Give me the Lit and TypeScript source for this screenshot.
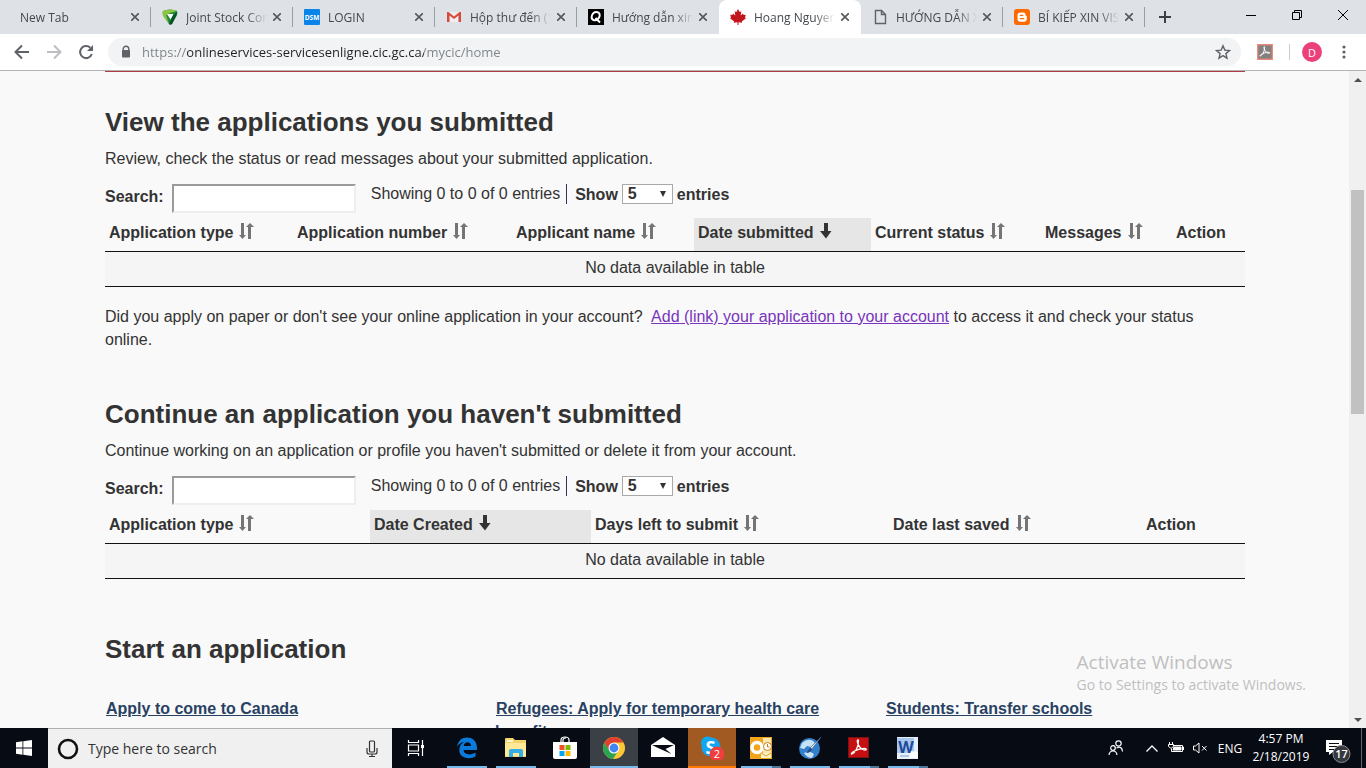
import { LitElement, html, svg, css, nothing } from "lit";
import { customElement, property } from "lit/decorators.js";
import { classMap } from "lit/directives/class-map.js";

interface Column {
  label: string;
  share: number;
  sort: "both" | "down" | "none";
}

@customElement("entries-table")
class EntriesTable extends LitElement {
  @property({ attribute: false }) columns: Column[] = [];
  @property() name = "";

  static styles = css`
    :host {
      display: block;
      margin-top: 14px;
    }
    .controls {
      display: flex;
      align-items: flex-start;
      height: 34px;
    }
    .search {
      display: flex;
      align-items: flex-start;
      gap: 8px;
      font-weight: bold;
      line-height: 25px;
      margin-right: 15px;
    }
    .search-box {
      box-sizing: border-box;
      width: 184px;
      height: 29px;
      padding: 0 4px;
      border: 2px solid;
      border-color: #9a9a9a #eeeeee #eeeeee #9a9a9a;
      background: #fff;
      font: inherit;
      font-weight: normal;
      color: #333;
    }
    .info {
      line-height: 20px;
      padding-right: 6px;
      border-right: 1px solid #335;
    }
    .show {
      display: flex;
      align-items: flex-start;
      gap: 4px;
      margin-left: 8px;
      line-height: 22px;
      font-weight: bold;
    }
    .picker {
      display: grid;
      width: 51px;
      height: 20px;
    }
    .picker > * {
      grid-area: 1 / 1;
    }
    .select {
      appearance: none;
      box-sizing: border-box;
      width: 100%;
      height: 20px;
      padding: 0 5px;
      border: 1px solid #a9a9a9;
      border-radius: 0;
      background: #fff;
      color: #333;
      font: inherit;
      line-height: 18px;
    }
    .caret {
      width: 6px;
      height: 6px;
      align-self: center;
      justify-self: end;
      margin-right: 7px;
      pointer-events: none;
    }
    .table {
      width: 100%;
      table-layout: fixed;
      border-collapse: separate;
      border-spacing: 0;
    }
    .head {
      padding: 3px 4px 7px;
      border-bottom: 1px solid #111;
      text-align: left;
      white-space: nowrap;
      line-height: 23px;
    }
    .sorted {
      background: #e6e6e6;
    }
    .sorter {
      display: flex;
      align-items: center;
      gap: 5px;
      padding: 0;
      border: 0;
      background: none;
      font: inherit;
      color: inherit;
    }
    .arrow {
      width: 16px;
      height: 16px;
      margin-bottom: 3px;
    }
    .empty {
      padding: 4px 4px 7px;
      border-bottom: 1px solid #111;
      background: #f5f5f5;
      text-align: center;
      line-height: 23px;
    }
  `;

  private arrow(kind: Column["sort"]) {
    return kind === "both"
      ? html`<svg class="arrow" viewBox="0 0 16 16" fill="#757575">
          <path d="M3 0h3v12h2l-3.500 4L1 12h2zM10 16h3V4h3l-4-4-4 4h2z" />
        </svg>`
      : html`<svg class="arrow" viewBox="0 0 16 16" fill="#333">
          <path d="M5 0h4v8h3.500L7 15.500 1 8h4z" />
        </svg>`;
  }

  render() {
    const total = this.columns.reduce((sum, c) => sum + c.share, 0);
    return html`
      <div class="controls">
        <label class="search" for="search">Search:
          <input class="search-box" id="search" type="text" />
        </label>
        <span class="info">Showing 0 to 0 of 0 entries</span>
        <label class="show">Show
          <span class="picker">
            <select class="select">
              <option>5</option>
              <option>10</option>
              <option>25</option>
            </select>
            <svg class="caret" viewBox="0 0 6 6"><path d="M0 0h6L3 6z" fill="#333" /></svg>
          </span>
          entries
        </label>
      </div>
      <table class="table" aria-label=${this.name}>
        <colgroup>
          ${this.columns.map((c) => html`<col style="width:${(c.share / total) * 100}%" />`)}
        </colgroup>
        <thead>
          <tr>
            ${this.columns.map(
              (c) => html`<th class=${classMap({ head: true, sorted: c.sort === "down" })} scope="col">
                ${c.sort === "none"
                  ? c.label
                  : html`<button class="sorter">${c.label}${this.arrow(c.sort)}</button>`}
              </th>`
            )}
          </tr>
        </thead>
        <tbody>
          <tr>
            <td class="empty" colspan=${this.columns.length}>No data available in table</td>
          </tr>
        </tbody>
      </table>
    `;
  }
}

const MAPLE =
  "M8 0l1.6 3 1.7-.8-.6 4.2L13 4.600l.6 1.400 2.200-.2-.8 2.700 1 .8-4.200 3.200.4 1.300-3.700-.5V16H7.500v-2.700l-3.700.5.4-1.300L0 9.300l1-.8L.2 5.800 2.400 6 3 4.600l2.300 1.800-.6-4.200 1.700.8z";

const favicons = {
  none: nothing,
  shield: svg`<path d="M1 2q7-3 14 0 1 3-1 6l-4 7q-2 1-3 0L2 8Q0 5 1 2z" fill="#1f8a3b"/><path d="M1 2q7-3 14 0L8 4 4 6l3 9L2 8Q0 5 1 2z" fill="#8cc63f"/><path d="M15 3q0 3-2 6l-3 6q-2 1-3 0l4-9z" fill="#07502a"/><path d="M5 5h6.500L8.500 10.500z" fill="#fff"/>`,
  dsm: svg`<rect width="16" height="16" rx="1" fill="#0a84e8"/><text x="8" y="10.500" text-anchor="middle" font-family="Open Sans" font-size="6.500" font-weight="bold" fill="#fff">DSM</text>`,
  gmail: svg`<path d="M1 3h14v10H1z" fill="#eee"/><path d="M1 13V3h1.500L8 7.500 13.500 3H15v10h-2.500V6.500L8 10 3.500 6.500V13z" fill="#d54b3d"/>`,
  q: svg`<rect width="16" height="16" fill="#000"/><path d="M10.500 3.500C6.500 1.800 3.500 5 3.600 8.300c.1 3.200 3.900 4 6.300 1.800 2-1.900 2.600-5 .6-6.600M7.500 9l4.500 4.500" fill="none" stroke="#fff" stroke-width="2"/>`,
  maple: svg`<path d=${MAPLE} fill="#c3161c"/>`,
  page: svg`<path d="M3.500 1.500h6l4 4v9h-10zM9.500 1.500v4h4" fill="none" stroke="#5f6368" stroke-width="1.400"/>`,
  blogger: svg`<rect width="16" height="16" rx="3" fill="#ff6a00"/><path d="M6.500 3.500h2.700a2.300 2.300 0 0 1 2.300 2.500q0 1 1.300 1v2.700a3 3 0 0 1-3 3H6.500a3 3 0 0 1-3-3V6.500a3 3 0 0 1 3-3z" fill="#fff"/><path d="M6.300 6.300h2.500M6.300 9.700h3.500" stroke="#ff6a00" stroke-width="1.300" stroke-linecap="round"/>`,
};

const acrobatLine =
  "M5 18c3-1 6-6 6.500-13 0-2-2-1-1 1.500 1 4 4 7.500 7.500 7.500 2 0 1.500-1.800-1-1.700C13 12.500 9 14 6.500 15.500 4 17 4 18.500 5 18z";

const apps = [
  {
    name: "Microsoft Edge",
    state: "running",
    icon: svg`<path d="M2 11C3 4.500 7 1.500 12 1.500c6.500 0 10 4.500 10 10.500v2H8.500c.3 5 7.500 5.500 12 2.600v4C14 24 4.500 22 4.300 14.500 4.200 10.500 6 7.500 9 6 5.500 6.500 3.500 8.200 2 11zm6.700-1H16c0-5-6.800-5-7.300 0z" fill="#0a7bdc"/>`,
  },
  {
    name: "File Explorer",
    state: "running",
    icon: svg`<path d="M1 3q0-1 1-1h7l2 2h11v17H1z" fill="#f3d36b"/><path d="M3 4h6v2H3z" fill="#fff6cf"/><path d="M1 7h21v13H1z" fill="#ffe896"/><path d="M5 21v-6q0-2 2-2h10q2 0 2 2v6h-4v-4H9v4z" fill="#35ade5"/>`,
  },
  {
    name: "Microsoft Store",
    state: "idle",
    icon: svg`<path d="M8 6V4q0-3 4-3t4 3v2M10 6V3.500Q10.500 2 13 2" fill="none" stroke="#fff" stroke-width="1.200"/><path d="M0 6h24v15q0 2-2 2H2q-2 0-2-2z" fill="#fff"/><path d="M6.500 9h5v5h-5z" fill="#f25022"/><path d="M12.500 9h5v5h-5z" fill="#7fba00"/><path d="M6.500 15h5v5h-5z" fill="#00a4ef"/><path d="M12.500 15h5v5h-5z" fill="#ffb900"/>`,
  },
  {
    name: "Google Chrome",
    state: "active",
    icon: svg`<circle cx="12" cy="12" r="11" fill="#fcc934"/><path d="M12 12L2.500 6.500A11 11 0 0 1 21.500 6.500H12z" fill="#e2402e"/><path d="M2.500 6.500A11 11 0 0 0 11 23l5.500-8.500L12 12 6 12z" fill="#2da44f"/><path d="M2.500 6.500L7 14l5-7.500z" fill="#e2402e"/><circle cx="12" cy="12" r="5.500" fill="#fff"/><circle cx="12" cy="12" r="4.400" fill="#4285f4"/>`,
  },
  {
    name: "Mail",
    state: "idle",
    icon: svg`<path d="M0 9l12-8 12 8v12H0z" fill="#fff"/><path d="M1 9h22l-8.500 4 6 5L6 11.500z" fill="#070b14"/>`,
  },
  {
    name: "Skype",
    state: "alert",
    icon: svg`<circle cx="7.500" cy="7" r="6.500" fill="#00aff0"/><circle cx="15" cy="15.500" r="6.500" fill="#0092e0"/><circle cx="11" cy="11" r="9.500" fill="#12a5f4"/><text x="10.500" y="17.500" text-anchor="middle" font-family="Open Sans" font-size="18" font-weight="bold" fill="#fff">S</text><circle cx="17" cy="18" r="7.500" fill="#ee3e3e"/><text x="17" y="22" text-anchor="middle" font-family="Open Sans" font-size="11" fill="#fff">2</text>`,
  },
  {
    name: "Outlook",
    state: "stacked",
    icon: svg`<path d="M1 1h22v22H1z" fill="#f2a51b"/><path d="M14 2h8v20h-8z" fill="#fbe7b3"/><circle cx="8" cy="11.500" r="5" fill="none" stroke="#fff" stroke-width="3.500"/><circle cx="18.500" cy="10.500" r="4" fill="#fff" stroke="#c58219"/><path d="M18.500 8v3h2" fill="none" stroke="#c58219"/><path d="M12 17h10v5H12z" fill="#fff3ca"/><path d="M12 17l5 3 5-3" fill="none" stroke="#e0a030"/>`,
  },
  {
    name: "UniKey",
    state: "running",
    icon: svg`<circle cx="11.500" cy="12.500" r="10.500" fill="#327fcb"/><path d="M4 7q8-7 14 1l-5 3-4-1-3 3-4-1zM6 17l5-2 5 3-2 4q-5 0-8-5z" fill="#c6e2f5"/><path d="M23 1L14 13l-2-1z" fill="#edf2f7" stroke="#315e98" stroke-width=".7"/><path d="M14 13q-1 4-6 4l4-5z" fill="#254c86"/>`,
  },
  {
    name: "Adobe Reader",
    state: "stacked",
    icon: svg`<rect x="1.500" y="1.500" width="20" height="20" fill="#c60f12" stroke="#7c1113"/><path d=${acrobatLine} fill="none" stroke="#fff" stroke-width="1.300"/>`,
  },
  {
    name: "Word",
    state: "stacked",
    icon: svg`<path d="M1 1h21v22H1z" fill="#e6effa"/><path d="M1 2h17v15H1z" fill="#a9c7ec"/><text x="10" y="17" text-anchor="middle" font-family="Open Sans" font-size="16" font-weight="bold" fill="#1d4a9c">W</text><path d="M15 15l7 1v6h-9z" fill="#fff"/><path d="M4 20h9" stroke="#7da0cf"/>`,
  },
];

const tabs: { title: string; icon: keyof typeof favicons; active?: boolean; rule?: boolean }[] = [
  { title: "New Tab", icon: "none", rule: true },
  { title: "Joint Stock Company", icon: "shield", rule: true },
  { title: "LOGIN", icon: "dsm", rule: true },
  { title: "Hộp thư đến (1) - Gmail", icon: "gmail", rule: true },
  { title: "Hướng dẫn xin visa", icon: "q" },
  { title: "Hoang Nguyen", icon: "maple", active: true },
  { title: "HƯỚNG DẪN XIN VISA", icon: "page", rule: true },
  { title: "BÍ KIẾP XIN VISA", icon: "blogger", rule: true },
];

const submitted: Column[] = [
  { label: "Application type", share: 188, sort: "both" },
  { label: "Application number", share: 219, sort: "both" },
  { label: "Applicant name", share: 182, sort: "both" },
  { label: "Date submitted", share: 177, sort: "down" },
  { label: "Current status", share: 170, sort: "both" },
  { label: "Messages", share: 131, sort: "both" },
  { label: "Action", share: 73, sort: "none" },
];

const drafts: Column[] = [
  { label: "Application type", share: 265, sort: "both" },
  { label: "Date Created", share: 221, sort: "down" },
  { label: "Days left to submit", share: 298, sort: "both" },
  { label: "Date last saved", share: 253, sort: "both" },
  { label: "Action", share: 103, sort: "none" },
];

@customElement("app-root")
class AppRoot extends LitElement {
  static styles = css`
    :host {
      display: flex;
      flex-direction: column;
      height: 100vh;
      overflow: hidden;
      font-family: "Open Sans", "Noto Sans", sans-serif;
      font-size: 12px;
      color: #333;
    }
    button {
      display: flex;
      align-items: center;
      justify-content: center;
      padding: 0;
      border: 0;
      background: none;
      color: inherit;
      font: inherit;
    }
    svg {
      display: block;
      flex: none;
    }

    .tabs {
      display: flex;
      flex: none;
      height: 34px;
      padding-left: 9px;
      background: #dee1e6;
    }
    .tab {
      display: flex;
      align-items: center;
      flex: 0 1 142px;
      min-width: 0;
      color: #45494d;
    }
    .tab-active {
      background: #fff;
      border-radius: 8px 8px 0 0;
    }
    .tab-button {
      flex: 1;
      min-width: 0;
      height: 100%;
      gap: 8px;
      padding-left: 11px;
      justify-content: flex-start;
    }
    .tab-title {
      flex: 1;
      overflow: hidden;
      white-space: nowrap;
      text-align: left;
      mask-image: linear-gradient(to right, #000 75%, transparent);
    }
    .tab-close {
      width: 16px;
      height: 16px;
      margin: 0 7px 0 2px;
    }
    .tab-rule {
      width: 1px;
      height: 20px;
      background: transparent;
    }
    .tab-rule-on {
      background: #9a9da2;
    }
    .new-tab {
      width: 40px;
    }
    .window {
      display: flex;
      margin-left: auto;
      height: 29px;
    }
    .window-button {
      width: 46px;
    }

    .toolbar {
      display: flex;
      align-items: center;
      flex: none;
      height: 36px;
      padding: 0 6px;
      border-bottom: 1px solid #b3b3b5;
      background: #fff;
    }
    .nav-button {
      width: 32px;
      height: 28px;
    }
    .omnibox {
      display: flex;
      align-items: center;
      flex: 1;
      height: 28px;
      margin: 0 8px 0 6px;
      padding: 0 10px 0 12px;
      gap: 10px;
      border-radius: 14px;
      background: #f1f3f4;
    }
    .url {
      flex: 1;
      min-width: 0;
      height: 24px;
      padding: 0;
      border: 0;
      outline: 0;
      font: inherit;
      font-size: 13px;
      color: transparent;
      background: linear-gradient(to right, #7d8287 44px, #202124 44px, #202124 282px, #7d8287 282px);
      background-clip: text;
    }
    .extension {
      width: 32px;
    }
    .bar-rule {
      width: 1px;
      height: 16px;
      margin: 0 12px 0 8px;
      background: #c9cbce;
    }
    .avatar {
      width: 20px;
      height: 20px;
      border-radius: 50%;
      background: #ec407a;
      color: #fff;
      font-size: 11px;
    }
    .more {
      width: 32px;
      margin-left: 6px;
    }

    .view {
      display: flex;
      flex: 1;
      min-height: 0;
      background: #f9f9f9;
    }
    .page {
      flex: 1;
      overflow: hidden;
      padding-left: 1px;
      font: 16px/23px "Liberation Sans", Arial, sans-serif;
    }
    .container {
      max-width: 1140px;
      margin: 0 auto;
      border-top: 1px solid #af3c43;
    }
    .section {
      margin-bottom: 49px;
    }
    .heading {
      margin: 0;
      font-size: 26px;
      line-height: 28px;
    }
    .first {
      margin-top: 36px;
    }
    .intro {
      margin: 11px 0 0;
    }
    .note {
      margin: 18px 0 0;
    }
    .note-link {
      margin-left: 4px;
      color: #7834bc;
    }
    .drafts {
      margin-bottom: 56px;
    }
    .starts {
      display: grid;
      grid-template-columns: repeat(3, 1fr);
      gap: 30px;
      margin-top: 34px;
    }
    .start-link {
      padding-left: 1px;
      font-weight: bold;
      color: #284162;
    }

    .scrollbar {
      display: flex;
      flex-direction: column;
      align-items: center;
      width: 17px;
      background: #f0f0f0;
    }
    .scroll-button {
      width: 17px;
      height: 17px;
    }
    .track-before {
      flex: 102;
    }
    .thumb {
      flex: 224;
      width: 13px;
      background: #c1c1c1;
    }
    .track-after {
      flex: 297;
    }

    .watermark {
      position: absolute;
      right: 60px;
      bottom: 73px;
      color: #bfbfbf;
      font-size: 14px;
      line-height: 20px;
      pointer-events: none;
    }
    .watermark-title {
      font-size: 19px;
      line-height: 25px;
    }

    .taskbar {
      display: flex;
      flex: none;
      height: 40px;
      background: #070b14;
      color: #fff;
    }
    .start {
      width: 48px;
    }
    .task-search {
      display: flex;
      align-items: center;
      flex: 0 1 344px;
      box-sizing: border-box;
      padding: 0 12px 0 8px;
      gap: 8px;
      border-top: 1px solid #b0b0b0;
      background: #f0f0f0;
    }
    .task-input {
      flex: 1;
      min-width: 0;
      padding: 0;
      border: 0;
      outline: 0;
      background: none;
      font: inherit;
      font-size: 14px;
      color: #333;
    }
    .task-input::placeholder {
      color: #333;
    }
    .task-view {
      width: 48px;
      margin-right: 3px;
    }
    .apps {
      display: flex;
      gap: 1px;
    }
    .app {
      flex-direction: column;
      justify-content: flex-end;
      width: 48px;
      gap: 6px;
    }
    .line {
      width: 40px;
      height: 2px;
    }
    .running .line {
      background: #76b9ed;
    }
    .active {
      background: #3b3f46;
    }
    .active .line {
      width: 48px;
      background: #76b9ed;
    }
    .alert {
      background: #a15a22;
    }
    .alert .line {
      width: 48px;
      background: #ff7a00;
    }
    .stacked .line {
      background: linear-gradient(to right, #76b9ed 31px, #4c7799 31px);
    }
    .tray {
      display: flex;
      align-items: center;
      margin-left: auto;
      padding-right: 4px;
    }
    .tray-button {
      width: 24px;
      height: 40px;
    }
    .people {
      margin-right: 12px;
    }
    .language {
      width: 36px;
      height: 40px;
    }
    .clock {
      width: 66px;
      text-align: center;
      line-height: 18px;
    }
    .notices {
      width: 47px;
      height: 40px;
    }
    .desktop {
      width: 1px;
      height: 40px;
      background: #60646c;
    }
  `;

  private renderTab(tab: (typeof tabs)[number]) {
    return html`<div class=${classMap({ tab: true, "tab-active": !!tab.active })}>
      <button class="tab-button">
        ${tab.icon === "none"
          ? nothing
          : html`<svg width="16" height="16" viewBox="0 0 16 16">${favicons[tab.icon]}</svg>`}
        <span class="tab-title">${tab.title}</span>
      </button>
      <button class="tab-close" aria-label="Close tab">
        <svg width="8" height="8" viewBox="0 0 8 8">
          <path d="M0 0l8 8M8 0L0 8" stroke="#55585c" stroke-width="1.600" />
        </svg>
      </button>
      <span class=${classMap({ "tab-rule": true, "tab-rule-on": !!tab.rule })}></span>
    </div>`;
  }

  render() {
    return html`
      <header class="tabs">
        ${tabs.map((t) => this.renderTab(t))}
        <button class="new-tab" aria-label="New tab">
          <svg width="12" height="12" viewBox="0 0 12 12">
            <path d="M6 0v12M0 6h12" stroke="#3c4043" stroke-width="2" />
          </svg>
        </button>
        <div class="window">
          <button class="window-button" aria-label="Minimize">
            <svg width="10" height="10"><path d="M0 5.500h10" stroke="#000" /></svg>
          </button>
          <button class="window-button" aria-label="Restore">
            <svg width="10" height="10">
              <path d="M.5 2.500h7v7h-7zM2.500 2.500v-2h7v7h-2" fill="none" stroke="#000" />
            </svg>
          </button>
          <button class="window-button" aria-label="Close">
            <svg width="10" height="10"><path d="M0 0l10 10M10 0L0 10" stroke="#000" /></svg>
          </button>
        </div>
      </header>

      <div class="toolbar">
        <button class="nav-button" aria-label="Back">
          <svg width="16" height="16" viewBox="0 0 16 16">
            <path d="M15 8H2M8 1.500L1.500 8 8 14.500" fill="none" stroke="#5f6368" stroke-width="2" />
          </svg>
        </button>
        <button class="nav-button" aria-label="Forward">
          <svg width="16" height="16" viewBox="0 0 16 16">
            <path d="M1 8h13M8 1.500L14.500 8 8 14.500" fill="none" stroke="#bcbec1" stroke-width="2" />
          </svg>
        </button>
        <button class="nav-button" aria-label="Reload">
          <svg width="16" height="16" viewBox="0 0 16 16">
            <path d="M13.800 10A6 6 0 1 1 12.300 3.800" fill="none" stroke="#5f6368" stroke-width="2" />
            <path d="M15 1v6H9z" fill="#5f6368" />
          </svg>
        </button>
        <div class="omnibox">
          <svg width="12" height="14" viewBox="0 0 12 14">
            <path d="M3.200 6V4a2.800 2.800 0 0 1 5.600 0v2" fill="none" stroke="#5f6368" stroke-width="1.400" />
            <rect x="2" y="5" width="8" height="7.500" rx="1" fill="#5f6368" />
          </svg>
          <input
            class="url"
            type="text"
            aria-label="Address"
            value="https://onlineservices-servicesenligne.cic.gc.ca/mycic/home"
          />
          <button aria-label="Bookmark this page">
            <svg width="16" height="16" viewBox="0 0 16 16">
              <path
                d="M8 1.800l1.800 4.300 4.700.4-3.600 3.100 1.100 4.600L8 11.700l-4 2.500 1.100-4.600L1.500 6.500l4.700-.4z"
                fill="none"
                stroke="#5f6368"
                stroke-width="1.400"
              />
            </svg>
          </button>
        </div>
        <button class="extension" aria-label="Adobe Acrobat">
          <svg width="16" height="16" viewBox="0 0 24 24">
            <rect x="1" y="1" width="22" height="22" fill="#858080" stroke="#ed8b78" stroke-width="2" />
            <path d=${acrobatLine} fill="none" stroke="#fff" stroke-width="1.500" />
          </svg>
        </button>
        <span class="bar-rule"></span>
        <button class="avatar" aria-label="Profile">D</button>
        <button class="more" aria-label="Menu">
          <svg width="4" height="14" viewBox="0 0 4 14" fill="#5f6368">
            <circle cx="2" cy="2" r="1.600" />
            <circle cx="2" cy="7" r="1.600" />
            <circle cx="2" cy="12" r="1.600" />
          </svg>
        </button>
      </div>

      <div class="view">
        <main class="page">
          <div class="container">
            <section class="section">
              <h2 class="heading first">View the applications you submitted</h2>
              <p class="intro">Review, check the status or read messages about your submitted application.</p>
              <entries-table name="Submitted applications" .columns=${submitted}></entries-table>
              <p class="note">
                Did you apply on paper or don't see your online application in your account?
                <a class="note-link" href="#link">Add (link) your application to your account</a>
                to access it and check your status online.
              </p>
            </section>
            <section class="section drafts">
              <h2 class="heading">Continue an application you haven't submitted</h2>
              <p class="intro">
                Continue working on an application or profile you haven't submitted or delete it from your account.
              </p>
              <entries-table name="Applications in progress" .columns=${drafts}></entries-table>
            </section>
            <section>
              <h2 class="heading">Start an application</h2>
              <div class="starts">
                <div><a class="start-link" href="#come">Apply to come to Canada</a></div>
                <div>
                  <a class="start-link" href="#refugees">Refugees: Apply for temporary health care benefits</a>
                </div>
                <div><a class="start-link" href="#students">Students: Transfer schools</a></div>
              </div>
            </section>
          </div>
        </main>
        <div class="scrollbar">
          <button class="scroll-button" aria-label="Scroll up">
            <svg width="8" height="4"><path d="M0 4l4-4 4 4z" fill="#505050" /></svg>
          </button>
          <span class="track-before"></span>
          <span class="thumb"></span>
          <span class="track-after"></span>
          <button class="scroll-button" aria-label="Scroll down">
            <svg width="8" height="4"><path d="M0 0l4 4 4-4z" fill="#505050" /></svg>
          </button>
        </div>
      </div>

      <div class="watermark">
        <div class="watermark-title">Activate Windows</div>
        Go to Settings to activate Windows.
      </div>

      <footer class="taskbar">
        <button class="start" aria-label="Start">
          <svg width="16" height="16" viewBox="0 0 16 16" fill="#fff">
            <path d="M0 2.200l6.500-.9v6.200H0zM7.300 1.200L16 0v7.500H7.300zM0 8.400h6.500v6.300L0 13.800zM7.300 8.400H16V16l-8.700-1.200z" />
          </svg>
        </button>
        <label class="task-search">
          <svg width="24" height="24" viewBox="0 0 24 24">
            <circle cx="12" cy="12" r="9" fill="none" stroke="#111" stroke-width="2.600" />
          </svg>
          <input class="task-input" type="text" aria-label="Search Windows" placeholder="Type here to search" />
          <svg width="16" height="18" viewBox="0 0 16 18" fill="none" stroke="#333" stroke-width="1.200">
            <rect x="5.500" y="1" width="5" height="11" rx="1" />
            <path d="M3 8v4q0 2 2 2h6q2 0 2-2V8M8 14v2.500M5 16.500h6" />
          </svg>
        </label>
        <button class="task-view" aria-label="Task view">
          <svg width="18" height="16" viewBox="0 0 18 16" fill="none" stroke="#fff" stroke-width="1.200">
            <path d="M1.500 0v2.500h10V0M1.500 16v-2.500h10V16M1.500 5h10v6h-10zM15.500 0v16" />
            <path d="M14 5h3v3h-3z" fill="#fff" stroke="none" />
          </svg>
        </button>
        <nav class="apps">
          ${apps.map(
            (a) => html`<button class="app ${a.state}" aria-label=${a.name}>
              <svg width="24" height="24" viewBox="0 0 24 24">${a.icon}</svg>
              <span class="line"></span>
            </button>`
          )}
        </nav>
        <div class="tray">
          <button class="tray-button people" aria-label="People">
            <svg width="16" height="16" viewBox="0 0 16 16" fill="none" stroke="#fff" stroke-width="1.200">
              <circle cx="10.500" cy="3.500" r="2.700" />
              <circle cx="5" cy="8" r="2.300" />
              <path d="M1 15q.5-4 4-4t4 4M8.500 8q5.500-2.500 6 3.500" />
            </svg>
          </button>
          <button class="tray-button" aria-label="Show hidden icons">
            <svg width="12" height="7"><path d="M.5 6.500l5.500-5.500 5.500 5.500" fill="none" stroke="#fff" stroke-width="1.300" /></svg>
          </button>
          <button class="tray-button" aria-label="Battery">
            <svg width="16" height="12" viewBox="0 0 16 12" fill="none" stroke="#fff">
              <path d="M5 3.500h9.500v6H3.500v-3M14.500 5h1v3M1.500 0v2M4.500 0v2M.5 2.500h5v2l-2 1.500h-1l-2-1.500z" />
              <path d="M6 5h7v3H5z" fill="#fff" />
            </svg>
          </button>
          <button class="tray-button" aria-label="Volume muted">
            <svg width="16" height="12" viewBox="0 0 16 12" fill="none" stroke="#fff">
              <path d="M1.500 4h2l3.500-3v10L3.500 8h-2zM10 4l4.500 4.500M14.500 4L10 8.500" />
            </svg>
          </button>
          <button class="language">ENG</button>
          <div class="clock">4:57 PM<br />2/18/2019</div>
          <button class="notices" aria-label="Notifications">
            <svg width="30" height="30" viewBox="0 0 30 30">
              <path d="M3 7h16v12h-9l-4 3v-3H3z" fill="#fff" />
              <path d="M6 10.500h10M6 13.500h10M6 16.500h7" stroke="#070b14" />
              <circle cx="18.500" cy="21" r="8.500" fill="#35383d" stroke="#8b8d91" />
              <text x="18.500" y="25" text-anchor="middle" font-family="Open Sans" font-size="11" font-weight="600" fill="#fff">17</text>
            </svg>
          </button>
          <span class="desktop"></span>
        </div>
      </footer>
    `;
  }
}
